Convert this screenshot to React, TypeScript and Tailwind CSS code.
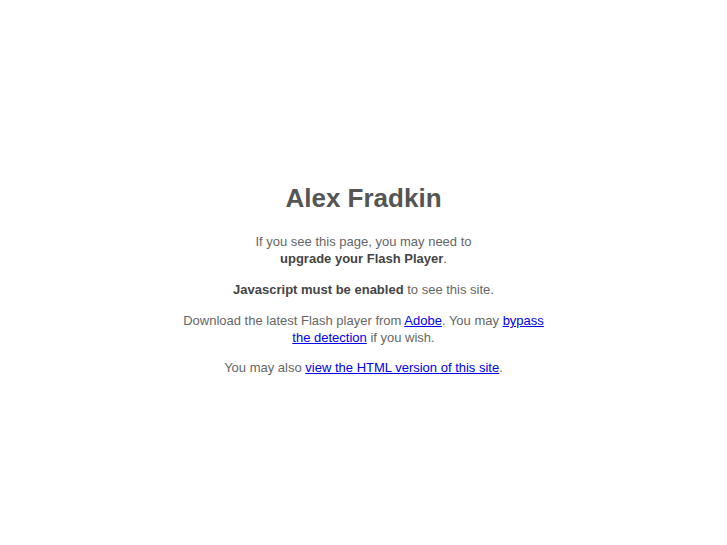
export default function App() {
  return (
    <div className="min-h-[545px] w-full bg-white font-['Liberation_Sans',Arial,sans-serif] text-[13px] leading-[17px] text-[#666]">
      <div className="mx-auto w-[372px] pt-[183px] text-center">
        <h1 className="text-[26px] font-bold leading-[30px] text-[#555]">Alex Fradkin</h1>
        <p className="mt-[20px]">
          If you see this page, you may need to
          <br />
          <b className="text-[#444]">upgrade your Flash Player</b>.
        </p>
        <p className="mt-[14px]">
          <b className="text-[#444]">Javascript must be enabled</b> to see this site.
        </p>
        <p className="mt-[14px]">
          Download the latest Flash player from{" "}
          <a href="#" className="text-[#0000ee] underline">Adobe</a>. You may{" "}
          <a href="#" className="text-[#0000ee] underline">bypass the detection</a> if you wish.
        </p>
        <p className="mt-[13px]">
          You may also{" "}
          <a href="#" className="text-[#0000ee] underline">view the HTML version of this site</a>.
        </p>
      </div>
    </div>
  );
}
